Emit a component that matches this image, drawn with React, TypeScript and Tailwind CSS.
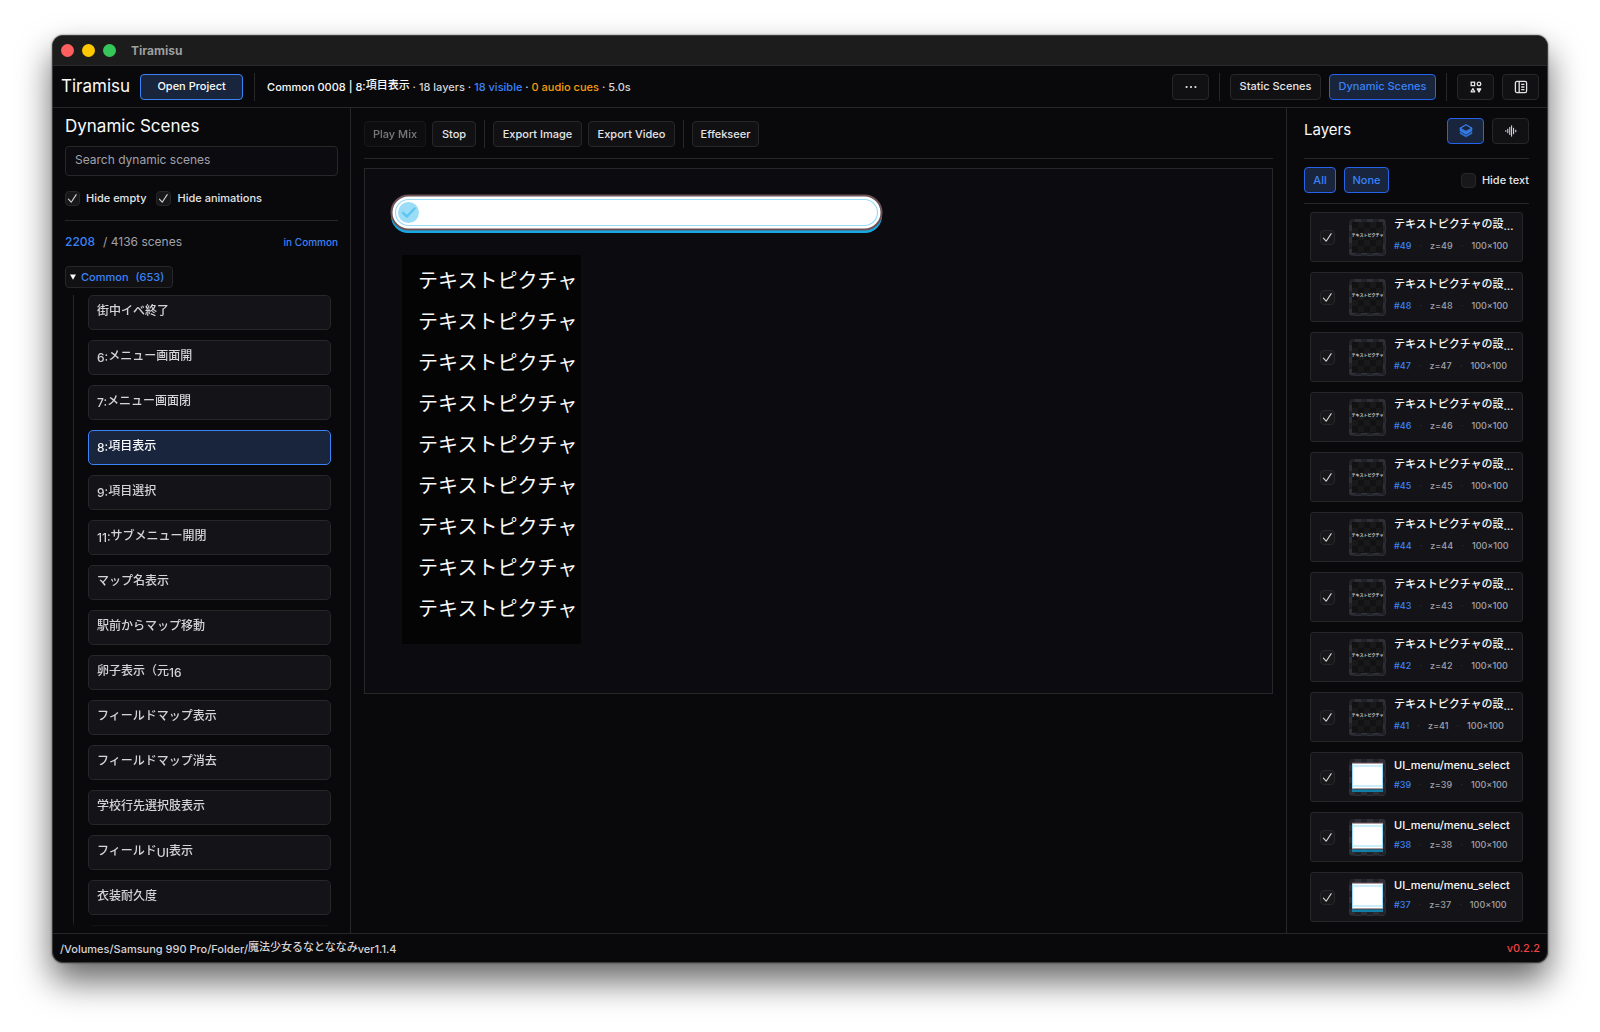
import { useState } from 'react'
import type { ReactNode } from 'react'

interface LayerItem {
  id: number
  name: string
  kind: 'text' | 'image'
}

const SCENES = [
  '街中イベ終了',
  '6:メニュー画面開',
  '7:メニュー画面閉',
  '8:項目表示',
  '9:項目選択',
  '11:サブメニュー開閉',
  'マップ名表示',
  '駅前からマップ移動',
  '卵子表示（元16',
  'フィールドマップ表示',
  'フィールドマップ消去',
  '学校行先選択肢表示',
  'フィールドUI表示',
  '衣装耐久度',
]

const LAYERS: LayerItem[] = [
  ...[49, 48, 47, 46, 45, 44, 43, 42, 41].map((id) => ({
    id,
    name: 'テキストピクチャの設…',
    kind: 'text' as const,
  })),
  ...[39, 38, 37].map((id) => ({
    id,
    name: 'UI_menu/menu_select',
    kind: 'image' as const,
  })),
]

const CANVAS_LINES = Array.from({ length: 9 }, () => 'テキストピクチャ')

// Japanese runs sit a little above the Latin baseline
const MixedText = ({ text }: { text: string }) => (
  <>
    {text.split(/([\u3000-\u30ff\u4e00-\u9fff\uff00-\uffef]+)/).map((part, i) =>
      i % 2 === 1 ? (
        <span key={i} className="align-[2px]">
          {part}
        </span>
      ) : (
        part
      ),
    )}
  </>
)

const Divider = () => <div className="w-px h-7 bg-[#27272a] shrink-0" />

interface ButtonProps {
  children: ReactNode
  variant?: 'default' | 'active' | 'primary'
  className?: string
  disabled?: boolean
  label?: string
}

const VARIANTS = {
  default: 'bg-[#111114] border-[#27272a] text-[#e4e4e7]',
  active: 'bg-[#18253c] border-[#2563eb] text-[#3b82f6]',
  primary: 'bg-[#18253c] border-[#3b82f6] text-[#fafafa]',
}

const Button = ({ children, variant = 'default', className = '', disabled = false, label }: ButtonProps) => (
  <button
    type="button"
    disabled={disabled}
    aria-label={label}
    className={`flex items-center justify-center h-[26px] rounded border text-[11px] font-medium whitespace-nowrap shrink-0 disabled:opacity-50 ${VARIANTS[variant]} ${className}`}
  >
    {children}
  </button>
)

const Checkbox = ({ id, initial = true, label }: { id: string; initial?: boolean; label?: string }) => {
  const [checked, setChecked] = useState(initial)
  return (
    <span className="relative flex w-[15px] h-[15px] shrink-0">
      <input
        id={id}
        type="checkbox"
        aria-label={label}
        checked={checked}
        onChange={() => setChecked(!checked)}
        className="appearance-none w-full h-full rounded border border-[#27272a] bg-[#18181b]"
      />
      {checked && (
        <svg
          viewBox="0 0 15 15"
          className="absolute inset-0 pointer-events-none"
          fill="none"
          stroke="#d4d4d8"
          strokeWidth="1.1"
          strokeLinecap="round"
          strokeLinejoin="round"
        >
          <path d="M3.4 8.2 L6.2 11.2 L11.2 3.6" />
        </svg>
      )}
    </span>
  )
}

const ShapesIcon = () => (
  <svg width="12" height="12" viewBox="0 0 12 12" fill="none" stroke="#e4e4e7" strokeWidth="1.3">
    <rect x="1.2" y="1.2" width="3.4" height="3.4" />
    <circle cx="9" cy="2.9" r="1.8" />
    <path d="M2.9 7.6 L4.7 10.8 H1.1 Z" strokeLinejoin="round" />
    <path d="M7.2 7.8 H10.8 L9 11 Z" fill="#e4e4e7" strokeLinejoin="round" />
  </svg>
)

const PanelIcon = () => (
  <svg width="14" height="14" viewBox="0 0 14 14" fill="none" stroke="#e4e4e7" strokeWidth="1.3">
    <rect x="1.4" y="1.4" width="11.2" height="11.2" rx="1.6" />
    <path d="M5.2 1.4 V12.6 M7.2 4.4 H10.4 M7.2 7 H10.4 M7.2 9.6 H10.4" />
  </svg>
)

const LayersIcon = () => (
  <svg width="14" height="14" viewBox="0 0 14 14" fill="none" stroke="#3b82f6" strokeWidth="1.1" strokeLinejoin="round">
    <path d="M7 0.8 L13 4.2 L7 7.6 L1 4.2 Z" />
    <path d="M1 5.2 V6.8 L7 10.2 L13 6.8 V5.2 L7 8.6 Z" fill="#3b82f6" strokeWidth="0.6" />
    <path d="M1 8 V9.6 L7 13 L13 9.6 V8 L7 11.4 Z" fill="#2f6fd6" strokeWidth="0.4" />
  </svg>
)

const WaveIcon = () => (
  <svg width="12" height="12" viewBox="0 0 12 12" stroke="#e4e4e7" strokeWidth="1" strokeLinecap="round">
    <path d="M0.8 5.6 V6.4 M2.8 4.2 V7.8 M4.8 2.4 V9.6 M6.6 0.8 V11.2 M8.6 3.2 V8.8 M10.8 5.2 V6.8" />
  </svg>
)

const TitleBar = () => (
  <div className="flex items-center h-[30px] px-2 bg-[#1c1c1c] border-b border-[#2a2a2a] shrink-0">
    <div className="flex gap-2">
      <span className="w-[13px] h-[13px] rounded-full bg-[#ff5f5e]" />
      <span className="w-[13px] h-[13px] rounded-full bg-[#fdc800]" />
      <span className="w-[13px] h-[13px] rounded-full bg-[#35c759]" />
    </div>
    <span className="ml-[15px] text-[12px] font-bold text-[#9e9e9e]">Tiramisu</span>
  </div>
)

const Header = () => (
  <header className="flex items-center h-[42px] px-2 border-b border-[#27272a] shrink-0">
    <h1 className="text-[17px] text-[#fafafa]">Tiramisu</h1>
    <Button variant="primary" className="ml-[10px] mr-[11px] w-[103px]">
      Open Project
    </Button>
    <Divider />
    <p className="ml-3 flex-1 text-[11px] font-medium text-[#d4d4d8] whitespace-nowrap">
      <span className="text-[#fafafa]">
        <MixedText text="Common 0008 | 8:項目表示" />
      </span>
      {' · 18 layers · '}
      <span className="text-[#3b82f6]">18 visible</span>
      {' · '}
      <span className="text-[#f59e0b]">0 audio cues</span>
      {' · 5.0s'}
    </p>
    <div className="flex items-center gap-[10px]">
      <Button className="w-[37px]" label="More">
        <svg width="12" height="4" viewBox="0 0 12 4" fill="#e4e4e7">
          <circle cx="1.6" cy="2" r="1.1" />
          <circle cx="6" cy="2" r="1.1" />
          <circle cx="10.4" cy="2" r="1.1" />
        </svg>
      </Button>
      <Divider />
      <div className="flex gap-2">
        <Button className="w-[91px]">Static Scenes</Button>
        <Button variant="active" className="w-[107px]">
          Dynamic Scenes
        </Button>
      </div>
      <Divider />
      <div className="flex gap-2">
        <Button className="w-[37px]" label="Assets">
          <ShapesIcon />
        </Button>
        <Button className="w-[37px]" label="Toggle panel">
          <PanelIcon />
        </Button>
      </div>
    </div>
  </header>
)

const ScenesPanel = () => {
  const [selected, setSelected] = useState(3)
  return (
    <aside className="flex flex-col w-[298px] px-3 pt-[6px] pb-[5px] border-r border-[#27272a] shrink-0">
      <h2 className="text-[17px] leading-6 text-[#fafafa]">Dynamic Scenes</h2>
      <input
        type="text"
        aria-label="Search dynamic scenes"
        placeholder="Search dynamic scenes"
        className="mt-2 h-[30px] px-[9px] pb-1 rounded border border-[#27272a] bg-[#0c0c10] text-[12px] text-[#e4e4e7] placeholder:text-[#a1a1aa] shrink-0"
      />
      <div className="flex items-center gap-[10px] mt-[14px] h-4 text-[11px] font-medium text-[#e4e4e7]">
        <span className="flex items-center gap-[6px]">
          <Checkbox id="hide-empty" />
          <label htmlFor="hide-empty">Hide empty</label>
        </span>
        <span className="flex items-center gap-[6px]">
          <Checkbox id="hide-animations" />
          <label htmlFor="hide-animations">Hide animations</label>
        </span>
      </div>
      <div className="mt-[14px] h-px bg-[#27272a] shrink-0" />
      <div className="flex items-center mt-[11px] h-5 text-[12px] text-[#a1a1aa]">
        <span className="font-medium text-[#3b82f6]">2208</span>
        <span className="ml-2">/ 4136 scenes</span>
        <span className="ml-auto text-[10px] font-medium text-[#3b82f6]">in Common</span>
      </div>
      <button
        type="button"
        className="flex items-center self-start mt-[14px] h-[22px] pl-1 pr-2 rounded border border-[#27272a] bg-[#111114] text-[11px] font-medium text-[#3b82f6] shrink-0"
      >
        <svg width="6" height="6" viewBox="0 0 6 6" fill="#fafafa">
          <path d="M0 0.5 H6 L3 5.8 Z" />
        </svg>
        <span className="ml-[5px]">Common</span>
        <span className="ml-[7px]">(653)</span>
      </button>
      <ul className="flex flex-col gap-[10px] flex-1 min-h-0 mt-[7px] ml-2 pl-[14px] pr-[7px] border-l border-[#27272a] overflow-hidden mask-[linear-gradient(to_bottom,black_calc(100%-8px),transparent)]">
        {SCENES.map((name, i) => (
          <li key={name} className="shrink-0">
            <button
              type="button"
              onClick={() => setSelected(i)}
              className={`w-full h-[35px] px-2 pb-[2px] rounded-[5px] border text-left text-[12px] font-medium ${
                i === selected
                  ? 'bg-[#18253c] border-[#3b82f6] text-[#fafafa]'
                  : 'bg-[#141418] border-[#27272a] text-[#d4d4d8]'
              }`}
            >
              <MixedText text={name} />
            </button>
          </li>
        ))}
        <li className="h-[35px] rounded-[5px] border border-[#27272a] bg-[#141418] shrink-0" />
      </ul>
    </aside>
  )
}

const MenuBarSprite = () => (
  <svg className="absolute left-[25px] top-[25px]" width="493" height="40" viewBox="0 0 493 40" fill="none">
    <rect x="1" y="5" width="491" height="34" rx="17" fill="#18a8e4" />
    <rect x="1.5" y="1.5" width="490" height="34" rx="17" fill="#fff" stroke="#6b5357" strokeWidth="2" />
    <rect x="5.5" y="5.5" width="482" height="26" rx="13" stroke="#9adcf6" strokeWidth="1.2" />
    <circle cx="18.5" cy="18.5" r="10.5" fill="#9bdcf7" />
    <path d="M13 18.8 L17 22.5 L24.5 14.5" stroke="#5cc6f0" strokeWidth="2.4" strokeLinecap="round" strokeLinejoin="round" />
  </svg>
)

const Stage = () => (
  <main className="flex flex-col flex-1 min-w-0 px-[13px] pt-3">
    <div className="flex items-center gap-[6px] h-7 text-[#e4e4e7]">
      <Button className="w-[62px]" disabled>
        Play Mix
      </Button>
      <Button className="w-[44px]">Stop</Button>
      <div className="mx-[2px]">
        <Divider />
      </div>
      <Button className="w-[89px]">Export Image</Button>
      <Button className="w-[87px]">Export Video</Button>
      <div className="mx-[2px]">
        <Divider />
      </div>
      <Button className="w-[67px]">Effekseer</Button>
    </div>
    <div className="mt-[10px] mb-[9px] h-px bg-[#27272a]" />
    <div className="relative aspect-[909/526] border border-[#27272a] bg-[#0c0b10] overflow-hidden">
      <MenuBarSprite />
      <div className="absolute left-[37px] top-[86px] w-[179px] h-[389px] pt-2 pl-4 bg-[#040405] overflow-hidden">
        {CANVAS_LINES.map((line, i) => (
          <p key={i} className="h-[41px] leading-[37px] text-[20px] text-[#fafafa] whitespace-nowrap">
            {line}
          </p>
        ))}
      </div>
    </div>
  </main>
)

const Thumb = ({ kind }: { kind: LayerItem['kind'] }) => (
  <div className="flex items-center justify-center w-[37px] h-[37px] p-[3px] rounded bg-[repeating-conic-gradient(#2f2f38_0%_25%,#222229_0%_50%)] bg-[length:12px_12px] shrink-0">
    {kind === 'text' ? (
      <div className="flex justify-center w-full h-full pt-2 bg-[repeating-conic-gradient(#19191b_0%_25%,#121213_0%_50%)] bg-[length:12px_12px] text-[4px] leading-[12px] font-bold text-[#c8c8c8] whitespace-nowrap overflow-hidden">
        テキストピクチャ
      </div>
    ) : (
      <svg width="31" height="31" viewBox="0 0 31 31">
        <rect x="0" y="1" width="31" height="26" fill="#fff" />
        <path d="M0 1.2 H31 M0 26.8 H31" stroke="#8a7074" strokeWidth="1" />
        <path d="M0.5 2 V26 M30.5 2 V26 M0 4 H31 M0 24 H31" stroke="#9adcf6" strokeWidth="1" />
        <rect x="0" y="27.5" width="31" height="2.5" fill="#127fa6" />
      </svg>
    )}
  </div>
)

const LayersPanel = () => (
  <aside className="flex flex-col w-[261px] pl-[17px] pr-[18px] pt-[10px] pb-2 border-l border-[#27272a] shrink-0">
    <div className="flex gap-2 h-[26px]">
      <h2 className="flex-1 text-[15px] leading-6 text-[#fafafa]">Layers</h2>
      <Button variant="active" className="w-[37px]" label="Layers">
        <LayersIcon />
      </Button>
      <Button className="w-[37px]" label="Audio">
        <WaveIcon />
      </Button>
    </div>
    <div className="mt-[14px] h-px bg-[#27272a] shrink-0" />
    <div className="flex items-center gap-2 mt-2 h-[26px]">
      <Button variant="active" className="w-8">
        All
      </Button>
      <Button variant="active" className="w-[45px]">
        None
      </Button>
      <span className="flex items-center gap-[6px] ml-auto text-[11px] font-medium text-[#e4e4e7]">
        <Checkbox id="hide-text" initial={false} />
        <label htmlFor="hide-text">Hide text</label>
      </span>
    </div>
    <div className="mt-[10px] h-px bg-[#27272a] shrink-0" />
    <ul className="flex flex-col gap-[10px] flex-1 min-h-0 mt-2 px-[6px] overflow-hidden">
      {LAYERS.map(({ id, name, kind }) => (
        <li
          key={id}
          className="flex items-center h-[50px] pl-[9px] pr-2 rounded-[3px] border border-[#27272a] bg-[#141418] shrink-0"
        >
          <Checkbox id={`layer-${id}`} label={`Layer ${id}`} />
          <div className="ml-[14px] mr-2">
            <Thumb kind={kind} />
          </div>
          <div className="flex-1 min-w-0 pb-1">
            <p className="text-[11px] leading-5 font-medium text-[#fafafa] whitespace-nowrap">
              <MixedText text={name} />
            </p>
            <p className="flex gap-2 text-[9px] leading-5 font-medium text-[#a1a1aa] whitespace-nowrap">
              <span className="text-[#3b82f6]">#{id}</span>
              <span className="text-[#2c2c31]">·</span>
              <span>z={id}</span>
              <span className="text-[#2c2c31]">·</span>
              <span>100×100</span>
            </p>
          </div>
        </li>
      ))}
    </ul>
  </aside>
)

const StatusBar = () => (
  <footer className="flex items-center justify-between h-[29px] px-[7px] border-t border-[#27272a] text-[11px] font-medium text-[#d4d4d8] shrink-0">
    <span>
      <MixedText text="/Volumes/Samsung 990 Pro/Folder/魔法少女るなとななみver1.1.4" />
    </span>
    <span className="text-[#ef4444]">v0.2.2</span>
  </footer>
)

export default function App() {
  return (
    <div
      lang="ja"
      className="flex h-screen px-[52px] pt-[35px] pb-[69px] bg-white font-['Inter','Noto_Sans_CJK_JP',sans-serif] overflow-hidden"
    >
      <div className="flex flex-col flex-1 min-w-0 rounded-[11px] border border-[#3c3c3c] bg-[#09090b] overflow-hidden shadow-[0_0_2px_rgba(0,0,0,0.6),0_18px_34px_rgba(0,0,0,0.6)]">
        <TitleBar />
        <Header />
        <div className="flex flex-1 min-h-0">
          <ScenesPanel />
          <Stage />
          <LayersPanel />
        </div>
        <StatusBar />
      </div>
    </div>
  )
}
